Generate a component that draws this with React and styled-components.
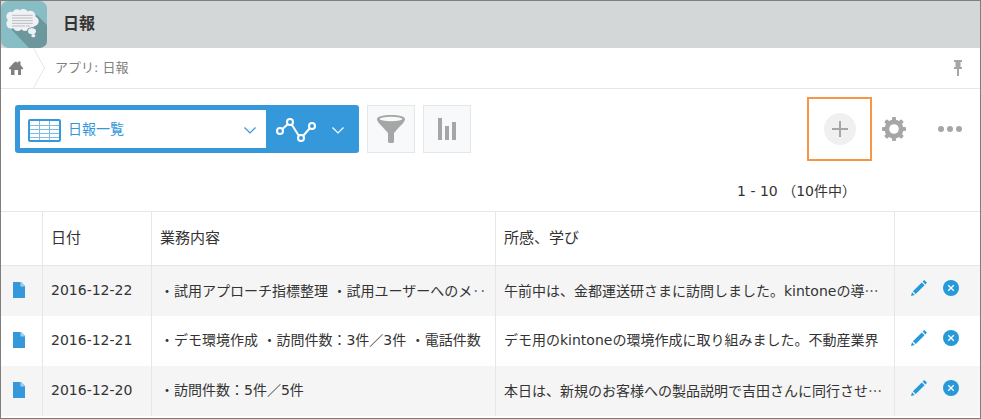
import React from "react";
import styled, { createGlobalStyle } from "styled-components";

const records = [
  {
    date: "2016-12-22",
    work: "・試用アプローチ指標整理 ・試用ユーザーへのメ",
    workMore: "‥",
    note: "午前中は、金都運送研さまに訪問しました。kintoneの導",
    noteMore: "…",
  },
  {
    date: "2016-12-21",
    work: "・デモ環境作成 ・訪問件数：3件／3件 ・電話件数",
    note: "デモ用のkintoneの環境作成に取り組みました。不動産業界",
  },
  {
    date: "2016-12-20",
    work: "・訪問件数：5件／5件",
    note: "本日は、新規のお客様への製品説明で吉田さんに同行させ",
    noteMore: "…",
  },
];

const AppLogo = () => (
  <svg width="46" height="47" viewBox="0 0 138 141" aria-hidden="true">
    <defs>
      <clipPath id="logoShape">
        <rect width="138" height="141" rx="22" />
      </clipPath>
    </defs>
    <g clipPath="url(#logoShape)">
      <rect width="138" height="141" fill="#87bec6" />
      <path d="M30 84 L84 141 H138 V72 L108 42 Z" fill="#6c979d" />
      <g fill="#f0f1f5">
        <circle cx="30" cy="46" r="14" />
        <circle cx="31" cy="68" r="15" />
        <circle cx="48" cy="39" r="14" />
        <circle cx="67" cy="39" r="15" />
        <circle cx="88" cy="44" r="15" />
        <circle cx="98" cy="61" r="15" />
        <circle cx="50" cy="76" r="14" />
        <circle cx="72" cy="77" r="13" />
        <circle cx="88" cy="70" r="13" />
        <rect x="30" y="38" width="64" height="42" />
      </g>
      <path d="M78 91 Q80 80 92 80 Q108 80 108 91" fill="none" stroke="#6c979d" strokeWidth="3" />
      <g fill="#f0f1f5">
        <ellipse cx="93" cy="91" rx="12" ry="9" />
        <ellipse cx="97" cy="104" rx="6" ry="5" />
      </g>
      <path d="M33 43H95M33 51H95M33 59H95M33 67H95M33 75H72" stroke="#b9bdc1" strokeWidth="3" />
      <path d="M76 75h3M82 75h3" stroke="#555" strokeWidth="2" />
    </g>
  </svg>
);

const HomeIcon = () => (
  <svg width="14" height="14" viewBox="0 0 14 14" fill="#808080" aria-hidden="true">
    <path d="M5 1.500L7 0.500L9 2V0.500H11.500V4L14 7V8.200H12V14H9V9H5.500V14H2V8.200H0V7z" />
  </svg>
);

const PinIcon = () => (
  <svg width="8" height="16" viewBox="0 0 8 16" fill="#a6a6a6" aria-hidden="true">
    <path d="M0 0h8v2H6.500v5H8v2H5v7H3V9H0V7h1.500V2H0z" />
  </svg>
);

const GridIcon = () => (
  <svg width="33" height="23" viewBox="0 0 33 23" fill="none" aria-hidden="true">
    <path d="M2 6.500H31M2 10.500H31M2 14.500H31M2 18.500H31M11.500 2V21M21.500 2V21" stroke="#7dbce7" />
    <rect x="1" y="1" width="31" height="21" rx="1" stroke="#3598db" strokeWidth="2" />
  </svg>
);

const Chevron = ({ color }) => (
  <svg width="12" height="7" viewBox="0 0 12 7" fill="none" aria-hidden="true">
    <path d="M0.500 0.500L6 6L11.500 0.500" stroke={color} strokeWidth="1.200" />
  </svg>
);

const GraphIcon = () => (
  <svg width="40" height="24" viewBox="0 0 40 24" fill="none" stroke="#fff" strokeWidth="2" aria-hidden="true">
    <path d="M6.500 11L12 6M16 7L23 18M27 18L34 10" />
    <circle cx="4" cy="13" r="3" />
    <circle cx="14" cy="4" r="3" />
    <circle cx="25" cy="20" r="3" />
    <circle cx="36" cy="8" r="3" />
  </svg>
);

const FilterIcon = () => (
  <svg width="28" height="28" viewBox="0 0 28 28" aria-hidden="true">
    <path d="M0 4C0 -1.300 28 -1.300 28 4C28 7 24 10 17 18V26.500Q17 28 14 28T11 26.500V18C4 10 0 7 0 4z" fill="#a6a6a6" />
    <ellipse cx="14" cy="4" rx="11.500" ry="2.200" fill="#f7f9fa" />
  </svg>
);

const BarsIcon = () => (
  <svg width="18" height="22" viewBox="0 0 18 22" fill="#a6a6a6" aria-hidden="true">
    <path d="M0 0h4v22H0zM7 8h4v14H7zM14 4h4v18h-4z" />
  </svg>
);

const PlusIcon = () => (
  <svg width="16" height="16" viewBox="0 0 16 16" aria-hidden="true">
    <path d="M8 0V16M0 8H16" stroke="#a6a6a6" strokeWidth="2" />
  </svg>
);

const GearIcon = () => (
  <svg width="24" height="24" viewBox="0 0 24 24" aria-hidden="true">
    {[0, 45, 90, 135].map((angle) => (
      <rect key={angle} x="10" y="0" width="4" height="24" rx="1" fill="#a6a6a6" transform={`rotate(${angle} 12 12)`} />
    ))}
    <circle cx="12" cy="12" r="9.500" fill="#a6a6a6" />
    <circle cx="12" cy="12" r="4.800" fill="#fff" />
  </svg>
);

const DotsIcon = () => (
  <svg width="24" height="6" viewBox="0 0 24 6" fill="#a6a6a6" aria-hidden="true">
    <circle cx="3" cy="3" r="3" />
    <circle cx="12" cy="3" r="3" />
    <circle cx="21" cy="3" r="3" />
  </svg>
);

const FileIcon = () => (
  <svg width="12" height="16" viewBox="0 0 12 16" aria-hidden="true">
    <path d="M0 0H8L12 4V16H0z" fill="#3598db" />
    <path d="M7.500 0V4.500H12L8 0z" fill="#a5d0ee" />
  </svg>
);

const PencilIcon = () => (
  <svg width="16" height="16" viewBox="0 0 16 16" fill="#2699d9" aria-hidden="true">
    <path d="M0 16L1 12.200L3.800 15zM1.900 11.300L10.800 2.400L13.600 5.200L4.700 14.100zM11.600 1.600L13.200 0L16 2.800L14.400 4.400z" />
  </svg>
);

const DeleteIcon = () => (
  <svg width="16" height="16" viewBox="0 0 16 16" aria-hidden="true">
    <circle cx="8" cy="8" r="8" fill="#2699d9" />
    <path d="M5.200 5.200L10.800 10.800M10.800 5.200L5.200 10.800" stroke="#fff" strokeWidth="1.300" />
  </svg>
);

const App = () => {
  return (
    <Page>
      <GlobalStyle />
      <Header>
        <AppLogo />
        <Title>日報</Title>
      </Header>
      <Breadcrumb aria-label="パンくず">
        <IconLink href="#home" aria-label="ホーム">
          <HomeIcon />
        </IconLink>
        <svg width="12" height="40" viewBox="0 0 12 40" fill="none" aria-hidden="true">
          <path d="M0.500 0L11.500 20L0.500 40" stroke="#e3e7e8" />
        </svg>
        <Crumb href="#app">アプリ: 日報</Crumb>
        <IconButton aria-label="ピン留め">
          <PinIcon />
        </IconButton>
      </Breadcrumb>
      <Toolbar>
        <ViewSwitch>
          <ViewPicker>
            <GridIcon />
            <ViewSelect aria-label="一覧">
              <option>日報一覧</option>
            </ViewSelect>
            <Chevron color="#3598db" />
          </ViewPicker>
          <GraphButton aria-label="グラフ">
            <GraphIcon />
            <Chevron color="#fff" />
          </GraphButton>
        </ViewSwitch>
        <SquareButton aria-label="絞り込む">
          <FilterIcon />
        </SquareButton>
        <SquareButton aria-label="集計する">
          <BarsIcon />
        </SquareButton>
        <Actions>
          <Highlight>
            <AddButton aria-label="レコードを追加する">
              <PlusIcon />
            </AddButton>
          </Highlight>
          <IconButton aria-label="設定">
            <GearIcon />
          </IconButton>
          <MoreButton aria-label="その他">
            <DotsIcon />
          </MoreButton>
        </Actions>
      </Toolbar>
      <Pager>1 - 10 （10件中）</Pager>
      <Table>
        <colgroup>
          <Col $width="42px" />
          <Col $width="109px" />
          <Col $width="344px" />
          <Col />
          <Col $width="85px" />
        </colgroup>
        <thead>
          <tr>
            <HeadCell aria-label="詳細" />
            <HeadCell>日付</HeadCell>
            <HeadCell>業務内容</HeadCell>
            <HeadCell>所感、学び</HeadCell>
            <HeadCell aria-label="操作" />
          </tr>
        </thead>
        <tbody>
          {records.map((record) => (
            <Row key={record.date}>
              <Cell>
                <FileLink href={`#${record.date}`} aria-label="レコードの詳細">
                  <FileIcon />
                </FileLink>
              </Cell>
              <Cell>{record.date}</Cell>
              <Cell>
                {record.work}
                {record.workMore && <More>{record.workMore}</More>}
              </Cell>
              <Cell>
                {record.note}
                {record.noteMore && <More>{record.noteMore}</More>}
              </Cell>
              <Cell>
                <RowActions>
                  <IconButton aria-label="編集">
                    <PencilIcon />
                  </IconButton>
                  <IconButton aria-label="削除">
                    <DeleteIcon />
                  </IconButton>
                </RowActions>
              </Cell>
            </Row>
          ))}
        </tbody>
      </Table>
    </Page>
  );
};

const GlobalStyle = createGlobalStyle`
  * {
    box-sizing: border-box;
  }
  body {
    margin: 0;
    background: #fff;
    color: #333;
    font-family: "DejaVu Sans", "Noto Sans CJK JP", sans-serif;
    font-size: 14px;
    line-height: 20px;
  }
  svg {
    display: block;
    flex: none;
  }
  button {
    margin: 0;
    padding: 0;
    border: 0;
    background: none;
    cursor: pointer;
  }
`

const Page = styled.div`
  min-height: 100vh;
  border: 1px solid #7f7f7f;
`

const Header = styled.header`
  display: flex;
  align-items: center;
  gap: 16px;
  background: #d3d7d8;
`

const Title = styled.h1`
  margin: 0;
  padding-bottom: 2px;
  font-size: 16px;
  line-height: 24px;
`

const Breadcrumb = styled.nav`
  display: flex;
  align-items: center;
  padding: 0 18px 0 8px;
  border-bottom: 1px solid #e3e7e8;
`

const IconLink = styled.a`
  margin-right: 10px;
`

const Crumb = styled.a`
  flex: 1;
  margin-left: 10px;
  color: #808080;
  font-size: 13px;
  text-decoration: none;
`

const IconButton = styled.button`
  display: flex;
`

const Toolbar = styled.div`
  display: flex;
  align-items: center;
  gap: 8px;
  padding: 8px 18px 0 14px;
`

const ViewSwitch = styled.div`
  display: flex;
  width: 344px;
  height: 48px;
  padding: 5px;
  border-radius: 3px;
  background: #3598db;
`

const ViewPicker = styled.div`
  display: flex;
  flex: 1;
  align-items: center;
  padding: 2px 10px 0 8px;
  background: #fff;
`

const ViewSelect = styled.select`
  flex: 1;
  margin: 0 0 0 7px;
  padding: 0 0 2px;
  border: 0;
  appearance: none;
  background: none;
  color: #3598db;
  font: inherit;
`

const GraphButton = styled.button`
  display: flex;
  align-items: center;
  gap: 16px;
  && {
    padding: 2px 10px 0;
  }
`

const SquareButton = styled.button`
  display: flex;
  align-items: center;
  justify-content: center;
  width: 48px;
  height: 48px;
  && {
    border: 1px solid #e3e7e8;
    background: #f7f9fa;
  }
`

const Actions = styled.div`
  display: flex;
  align-items: center;
  margin-left: auto;
  gap: 10px;
`

const Highlight = styled.div`
  display: flex;
  align-items: center;
  justify-content: center;
  width: 65px;
  height: 64px;
  border: 2px solid #f79646;
`

const AddButton = styled.button`
  display: flex;
  align-items: center;
  justify-content: center;
  width: 32px;
  height: 32px;
  && {
    border-radius: 50%;
    background: #f0f0f0;
  }
`

const MoreButton = styled(IconButton)`
  && {
    margin-left: 22px;
  }
`

const Pager = styled.div`
  padding: 20px 124px 10px;
  text-align: right;
`

const Table = styled.table`
  width: 100%;
  table-layout: fixed;
  border-collapse: separate;
  border-spacing: 0;
`

const Col = styled.col`
  width: ${(props) => props.$width || "auto"};
`

const HeadCell = styled.th`
  height: 55px;
  padding: 0 8px 2px;
  border: 1px solid #e3e7e8;
  border-left: 0;
  font-size: 15px;
  font-weight: normal;
  text-align: left;
  &:last-child {
    border-right: 0;
  }
`

const Row = styled.tr`
  &:nth-child(odd) {
    background: #f5f5f5;
  }
`

const Cell = styled.td`
  height: 50px;
  padding: 0 8px 2px;
  border-right: 1px solid #e3e7e8;
  overflow: hidden;
  white-space: nowrap;
  &:last-child {
    border-right: 0;
  }
`

const More = styled.span`
  font-family: "Noto Sans CJK JP", sans-serif;
`

const FileLink = styled.a`
  display: block;
  padding-left: 4px;
`

const RowActions = styled.div`
  display: flex;
  gap: 16px;
  padding: 0 0 4px 8px;
`

export default App;
